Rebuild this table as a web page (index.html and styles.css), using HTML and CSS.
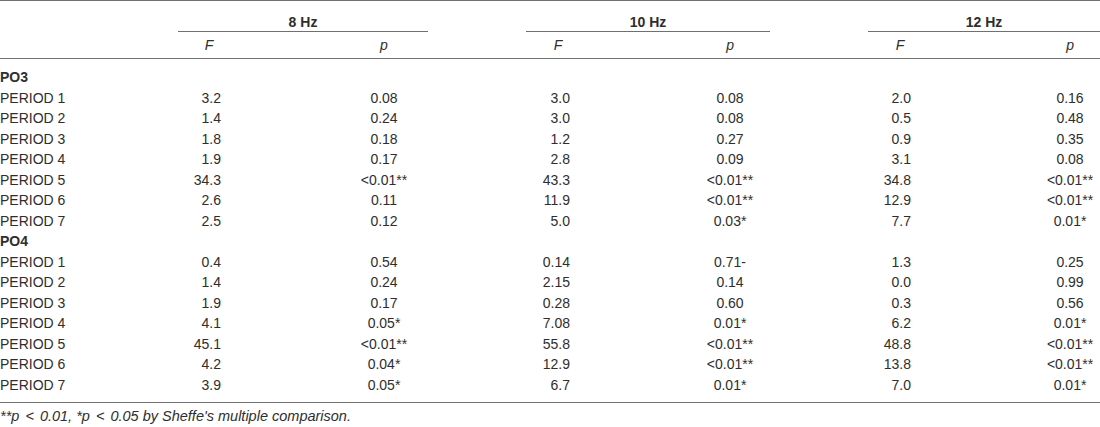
FILE: index.html
```html
<!DOCTYPE html>
<html lang="en">
<head>
    <meta charset="UTF-8">
    <title>F and p values by period</title>
    <link rel="stylesheet" href="styles.css">
</head>
<body>

    <table class="stats">
        <colgroup>
            <col class="c-label">
            <col class="c-f8">
            <col class="c-p8">
            <col class="c-f10">
            <col class="c-p10">
            <col class="c-f12">
            <col class="c-p12">
        </colgroup>
        <thead>
            <tr class="groups">
                <th></th>
                <th colspan="2" class="g8"><div>8 Hz</div></th>
                <th colspan="2" class="g10"><div>10 Hz</div></th>
                <th colspan="2" class="g12"><div>12 Hz</div></th>
            </tr>
            <tr class="sub">
                <th></th>
                <th class="f8">F</th>
                <th class="p8">p</th>
                <th class="f10">F</th>
                <th class="p10">p</th>
                <th class="f12">F</th>
                <th class="p12">p</th>
            </tr>
        </thead>
        <tbody>
            <!-- PO3 -->
            <tr class="section first"><td colspan="7">PO3</td></tr>
            <tr><td>PERIOD 1</td><td class="f8">3.2</td><td class="p8">0.08</td><td class="f10">3.0</td><td class="p10">0.08</td><td class="f12">2.0</td><td class="p12">0.16</td></tr>
            <tr><td>PERIOD 2</td><td class="f8">1.4</td><td class="p8">0.24</td><td class="f10">3.0</td><td class="p10">0.08</td><td class="f12">0.5</td><td class="p12">0.48</td></tr>
            <tr><td>PERIOD 3</td><td class="f8">1.8</td><td class="p8">0.18</td><td class="f10">1.2</td><td class="p10">0.27</td><td class="f12">0.9</td><td class="p12">0.35</td></tr>
            <tr><td>PERIOD 4</td><td class="f8">1.9</td><td class="p8">0.17</td><td class="f10">2.8</td><td class="p10">0.09</td><td class="f12">3.1</td><td class="p12">0.08</td></tr>
            <tr><td>PERIOD 5</td><td class="f8">34.3</td><td class="p8">&lt;0.01**</td><td class="f10">43.3</td><td class="p10">&lt;0.01**</td><td class="f12">34.8</td><td class="p12">&lt;0.01**</td></tr>
            <tr><td>PERIOD 6</td><td class="f8">2.6</td><td class="p8">0.11</td><td class="f10">11.9</td><td class="p10">&lt;0.01**</td><td class="f12">12.9</td><td class="p12">&lt;0.01**</td></tr>
            <tr><td>PERIOD 7</td><td class="f8">2.5</td><td class="p8">0.12</td><td class="f10">5.0</td><td class="p10">0.03*</td><td class="f12">7.7</td><td class="p12">0.01*</td></tr>
            <!-- PO4 -->
            <tr class="section"><td colspan="7">PO4</td></tr>
            <tr><td>PERIOD 1</td><td class="f8">0.4</td><td class="p8">0.54</td><td class="f10">0.14</td><td class="p10">0.71-</td><td class="f12">1.3</td><td class="p12">0.25</td></tr>
            <tr><td>PERIOD 2</td><td class="f8">1.4</td><td class="p8">0.24</td><td class="f10">2.15</td><td class="p10">0.14</td><td class="f12">0.0</td><td class="p12">0.99</td></tr>
            <tr><td>PERIOD 3</td><td class="f8">1.9</td><td class="p8">0.17</td><td class="f10">0.28</td><td class="p10">0.60</td><td class="f12">0.3</td><td class="p12">0.56</td></tr>
            <tr><td>PERIOD 4</td><td class="f8">4.1</td><td class="p8">0.05*</td><td class="f10">7.08</td><td class="p10">0.01*</td><td class="f12">6.2</td><td class="p12">0.01*</td></tr>
            <tr><td>PERIOD 5</td><td class="f8">45.1</td><td class="p8">&lt;0.01**</td><td class="f10">55.8</td><td class="p10">&lt;0.01**</td><td class="f12">48.8</td><td class="p12">&lt;0.01**</td></tr>
            <tr><td>PERIOD 6</td><td class="f8">4.2</td><td class="p8">0.04*</td><td class="f10">12.9</td><td class="p10">&lt;0.01**</td><td class="f12">13.8</td><td class="p12">&lt;0.01**</td></tr>
            <tr class="last"><td>PERIOD 7</td><td class="f8">3.9</td><td class="p8">0.05*</td><td class="f10">6.7</td><td class="p10">0.01*</td><td class="f12">7.0</td><td class="p12">0.01*</td></tr>
        </tbody>
    </table>

    <p class="note">**<i>p</i> <span class="op">&lt;</span> 0.01, *<i>p</i> <span class="op">&lt;</span> 0.05 by Sheffe's multiple comparison.</p>

</body>
</html>
```

FILE: styles.css
```css
body {
    margin: 0;
    padding: 0;
    background-color: #fff;
    color: #2e2e2e;
    font-family: "Liberation Sans", Arial, sans-serif;
    font-size: 14px;
}

.stats {
    width: 1100px;
    table-layout: fixed;
    border-collapse: collapse;
    border-top: 1px solid #707070;
    border-bottom: 1px solid #707070;
}

/* column widths include the gap to the left of each column */
.c-label { width: 178px; }
.c-f8 { width: 62px; }
.c-p8 { width: 188px; }
.c-f10 { width: 162px; }
.c-p10 { width: 180px; }
.c-f12 { width: 162px; }
.c-p12 { width: 168px; }

.stats th,
.stats td {
    padding: 0;
    font-weight: normal;
    white-space: nowrap;
}

/* group header row */
.groups th {
    padding-top: 13px;
    font-weight: bold;
    text-align: center;
    line-height: 16px;
}

.groups th div {
    padding-bottom: 1px;
    border-bottom: 1px solid #707070;
}

.groups .g10,
.groups .g12 {
    padding-left: 98px;
}

/* F / p row */
.sub th {
    height: 26px;
    font-style: italic;
    text-align: center;
    border-bottom: 1px solid #707070;
}

.stats .f10,
.stats .f12 {
    padding-left: 98px;
}

.stats .p8,
.stats .p10 {
    padding-left: 100px;
    text-align: center;
}

.stats .p12 {
    padding-left: 108px;
    text-align: center;
}

/* body rows */
.stats td {
    height: 20.5px;
    line-height: 16px;
}

.stats td.f8 {
    text-align: right;
    padding-right: 19px;
}

.stats td.f10 {
    text-align: right;
    padding-right: 20px;
}

.stats td.f12 {
    text-align: right;
    padding-right: 21px;
}

.section td {
    font-weight: bold;
}

.first td {
    padding-top: 8px;
}

.last td {
    padding-bottom: 7px;
}

.note {
    margin: 5px 0 0;
    font-size: 14.5px;
    font-style: italic;
}

.note .op {
    margin: 0 2px;
}
```
